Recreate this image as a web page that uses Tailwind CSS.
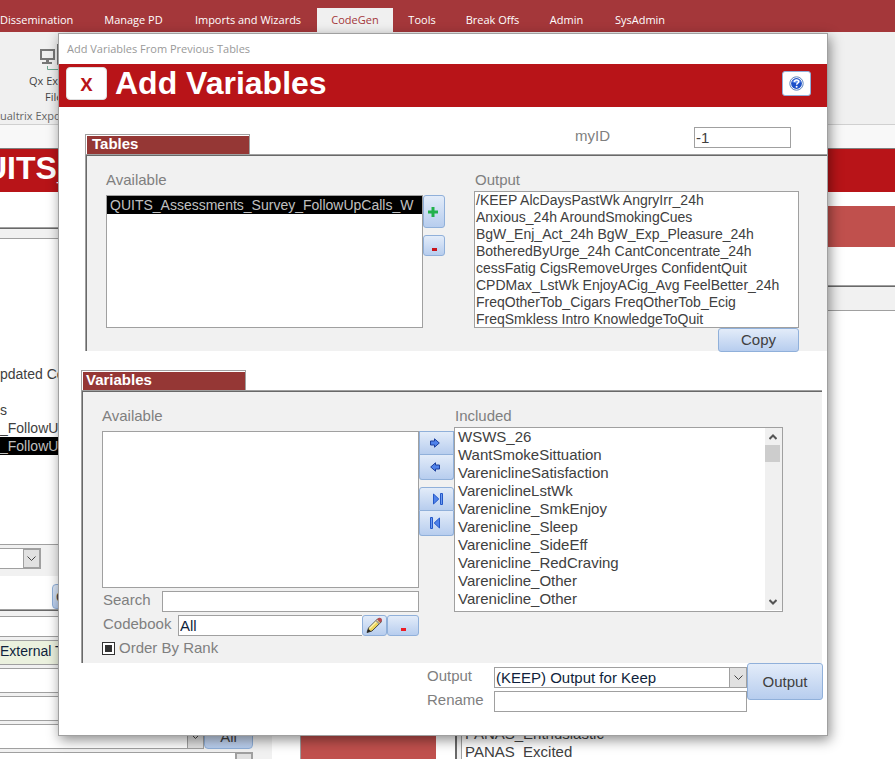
<!DOCTYPE html>
<html lang="en">
<head>
<meta charset="utf-8">
<title>Add Variables</title>
<script src="https://cdn.jsdelivr.net/npm/@tailwindcss/browser@4"></script>
</head>
<body class="bg-white">
<div class="relative h-screen overflow-hidden bg-white font-['Liberation_Sans',Arial,sans-serif] text-[15px] leading-[18px] text-[#404040]">

  <!-- Ribbon tabs -->
  <nav class="flex h-8 items-end bg-[#a4373a] font-['Open_Sans',sans-serif] text-[11px] text-white">
    <a href="#" class="h-6 w-[88px] leading-6">Dissemination</a>
    <a href="#" class="h-6 w-[91px] text-center leading-6">Manage PD</a>
    <a href="#" class="h-6 w-[138px] text-center leading-6">Imports and Wizards</a>
    <a href="#" class="h-6 w-[76px] bg-[#f0f0f0] text-center leading-6 text-[#a4373a]">CodeGen</a>
    <a href="#" class="h-6 w-[58px] text-center leading-6">Tools</a>
    <a href="#" class="h-6 w-[83px] text-center leading-6">Break Offs</a>
    <a href="#" class="h-6 w-[65px] text-center leading-6">Admin</a>
    <a href="#" class="h-6 w-[82px] text-center leading-6">SysAdmin</a>
  </nav>

  <!-- Ribbon body -->
  <div class="h-[93px] border-b border-[#d0d0d0] bg-[#f0f0f0] pt-3 font-['Open_Sans',sans-serif] text-[11px] leading-4 text-[#444]">
    <svg class="ml-10 block" width="40" height="29" viewBox="0 0 40 29" fill="none">
      <path d="M1 6h13v9H1z" stroke="#777" stroke-width="2"/>
      <path d="M6 16h3v2h3v2H2v-2h4z" fill="#777"/>
      <path d="M17.500-1.500h14v22h-14z" stroke="#777"/>
      <path d="M7.500 22v3.500h20" stroke="#6fa590"/>
    </svg>
    <p class="ml-[29px]">Qx Export</p>
    <p class="ml-[45px]">Files</p>
    <p class="mt-[3px] text-[#666]">ualtrix Export</p>
  </div>
  <div class="h-6 border-b border-[#808080] bg-[#f8f8f8]"></div>
  <div class="h-[43px] overflow-hidden bg-[#b81418]">
    <h2 class="-ml-4 pt-px text-[32px] leading-9 font-bold text-white">UITS_Assessments</h2>
  </div>

  <div class="flex items-stretch">
    <!-- Left column -->
    <div class="w-[272px] shrink-0">
      <div class="h-[35px]"></div>
      <div class="border-t border-[#a0a0a0] bg-[#f1f1f1]">
        <div class="border-t border-[#696969] pt-[9px]">
          <ul class="h-[307px] border-y border-[#a0a0a0] bg-white pt-[126px] text-[14px]">
            <li class="h-9">pdated Codes</li>
            <li>s</li>
            <li>_FollowUpCalls</li>
            <li class="bg-black text-[#c0c0c0]">_FollowUpCalls</li>
          </ul>
          <div class="flex pt-[3px] pb-[7px]">
            <label class="relative w-[41px]"><span class="sr-only">Source</span>
              <select class="block h-[21px] w-full appearance-none border border-l-0 border-[#a0a0a0] bg-white"><option></option></select>
              <span class="pointer-events-none absolute top-0 right-0 flex h-[21px] w-[18px] items-center justify-center border-2 border-l border-[#a0a0a0] bg-[#e1e1e1]"><svg width="9" height="6" viewBox="0 0 9 6" fill="none" stroke="#444"><path d="M.5.5l4 4 4-4"/></svg></span>
            </label>
          </div>
        </div>
      </div>
      <div class="h-[33px] pt-2 pl-[52px]"><button class="h-[25px] w-20 rounded border border-[#90b0da] bg-linear-to-b from-[#dfe9f7] to-[#b7cdee] pl-[3px] text-left">Open</button></div>
      <div class="border-t border-[#a0a0a0] bg-[#f1f1f1]">
        <div class="flex flex-col gap-[3px] border-t border-[#696969] pt-[5px] pr-[19px]">
          <input aria-label="Name" class="h-[21px] border border-l-0 border-[#a0a0a0] bg-white">
          <input aria-label="Kind" value="External Table" class="h-[25px] border border-l-0 border-[#a0a0a0] bg-[#ebf1de] pb-1 text-[14px] text-[#0f1f3c]">
          <input aria-label="Path" class="h-[25px] border border-l-0 border-[#a0a0a0] bg-white">
          <input aria-label="Filter" class="h-[25px] border border-l-0 border-[#a0a0a0] bg-white">
          <div class="flex">
            <label class="relative flex-1"><span class="sr-only">Group</span>
              <select class="block h-[25px] w-full appearance-none border border-l-0 border-[#a0a0a0] bg-white"><option></option></select>
              <span class="pointer-events-none absolute top-0 right-0 flex h-[25px] w-[17px] items-center justify-center border border-[#a0a0a0] bg-[#e1e1e1]"><svg width="9" height="6" viewBox="0 0 9 6" fill="none" stroke="#444"><path d="M.5.5l4 4 4-4"/></svg></span>
            </label>
            <button class="h-[25px] w-[49px] rounded border border-[#90b0da] bg-linear-to-b from-[#dfe9f7] to-[#b7cdee]">All</button>
          </div>
          <label class="relative"><span class="sr-only">Item</span>
            <select class="block h-[25px] w-full appearance-none border border-l-0 border-[#a0a0a0] bg-white"><option></option></select>
            <span class="pointer-events-none absolute top-0 right-0 h-[25px] w-[18px] border-2 border-[#a0a0a0] bg-[#e1e1e1]"></span>
          </label>
        </div>
      </div>
    </div>

    <!-- Right column -->
    <div class="flex min-w-0 flex-1 flex-col pt-[14px]">
      <div class="h-[41px] bg-[#c0504d]"></div>
      <div class="mt-[38px] border-t border-[#a0a0a0]"><div class="h-6 border-t border-[#696969] bg-[#f1f1f1]"></div></div>
      <div class="flex flex-1 border-t border-[#a0a0a0]">
        <div class="ml-7 w-[136px] border-l border-[#a0a0a0] bg-[#c0504d]"></div>
        <div class="ml-[19px] flex-1 border-l-2 border-[#696969] bg-[#f1f1f1] pl-1">
          <ul class="h-full border-l border-[#a0a0a0] bg-white pt-[414px] pl-[3px]">
            <li>PANAS_Enthusiastic</li>
            <li>PANAS_Excited</li>
          </ul>
        </div>
      </div>
    </div>
  </div>

  <!-- Dialog -->
  <section role="dialog" aria-labelledby="dlg" class="absolute top-[33px] right-[67px] left-[58px] border border-[#a0a0a0] bg-white pb-[23px] shadow-[2px_4px_12px_rgba(0,0,0,0.45)]">
    <p class="h-[30px] pl-2 font-['Open_Sans',sans-serif] text-[11px] leading-[30px] text-[#999]">Add Variables From Previous Tables</p>
    <header class="flex h-[43px] items-start bg-[#b81418] pr-4 pl-[7px]">
      <button class="mt-[3px] h-[33px] w-[41px] rounded border border-[#ddd] bg-white font-['Open_Sans',sans-serif] text-[18px] leading-7 font-bold text-[#b81418]">X</button>
      <h1 id="dlg" class="ml-2 flex-1 text-[32px] leading-[38px] font-bold text-white">Add Variables</h1>
      <button aria-label="Help" class="mt-[7px] flex h-[25px] w-[29px] items-center justify-center rounded-[3px] border border-[#90b0da] bg-white">
        <svg width="15" height="15" viewBox="0 0 15 15"><circle cx="7.500" cy="7.500" r="6.700" fill="#fff" stroke="#5f84bd"/><circle cx="7.500" cy="7.500" r="5.400" fill="#1c50c8"/><path d="M3 6a5 5 0 0 1 9 0q-4 2-9 0" fill="#6d9af0"/><path d="M5.500 6c0-2.600 4.200-2.600 4.200-.3 0 1.500-2 1.500-2 3" fill="none" stroke="#fff" stroke-width="1.500"/><circle cx="7.600" cy="10.800" r="1" fill="#fff"/></svg>
      </button>
    </header>

    <!-- Tables -->
    <div class="flex h-[47px] items-end pr-9 pl-[26px]">
      <h2 class="h-5 w-[165px] border border-b-0 border-[#a0a0a0] bg-white pt-px pl-px font-bold text-white"><span class="block h-[18px] bg-[#953735] pl-[5px] leading-4">Tables</span></h2>
      <label for="myid" class="mb-[9px] ml-auto w-[119px] text-[#7f7f7f]">myID</label>
      <input id="myid" value="-1" class="mb-[6px] h-[21px] w-[97px] border border-[#a0a0a0] bg-white pl-px">
    </div>
    <div class="ml-[26px] border-t border-l border-[#a0a0a0]">
      <div class="flex h-[196px] border-t border-l border-[#696969] bg-[#f1f1f1] pt-[15px] pr-7 pl-[19px]">
        <div class="min-w-0 flex-[317]">
          <h3 class="h-6 text-[#7f7f7f]">Available</h3>
          <ul role="listbox" class="h-[133px] overflow-hidden border border-[#a0a0a0] bg-white">
            <li role="option" aria-selected="true" class="overflow-hidden bg-black pl-[3px] text-[14px] whitespace-nowrap text-[#c0c0c0]">QUITS_Assessments_Survey_FollowUpCalls_W</li>
          </ul>
        </div>
        <div class="mr-[29px] flex w-[22px] flex-col gap-[7px] pt-6">
          <button aria-label="Add" class="flex h-[33px] items-center justify-center rounded-[3px] border border-[#90b0da] bg-linear-to-b from-[#e3ecf9] to-[#b7cdee] pr-0.5"><svg width="10" height="10" viewBox="0 0 10 10"><path d="M3.500 0h3v3.500H10v3H6.500V10h-3V6.500H0v-3h3.500z" fill="#22b14c"/></svg></button>
          <button aria-label="Remove" class="flex h-[21px] items-end justify-center rounded-[3px] border border-[#90b0da] bg-linear-to-b from-[#e3ecf9] to-[#b7cdee] pb-1"><svg width="5" height="3"><rect width="5" height="3" fill="#c8141c"/></svg></button>
        </div>
        <div class="min-w-0 flex-[325]">
          <label for="out" class="block h-5 pl-px text-[#7f7f7f]">Output</label>
          <textarea id="out" class="block h-[137px] w-full resize-none overflow-hidden border border-[#a0a0a0] bg-white pl-px text-[14px] leading-[17px] whitespace-pre">/KEEP AlcDaysPastWk AngryIrr_24h
Anxious_24h AroundSmokingCues
BgW_Enj_Act_24h BgW_Exp_Pleasure_24h
BotheredByUrge_24h CantConcentrate_24h
cessFatig CigsRemoveUrges ConfidentQuit
CPDMax_LstWk EnjoyACig_Avg FeelBetter_24h
FreqOtherTob_Cigars FreqOtherTob_Ecig
FreqSmkless Intro KnowledgeToQuit</textarea>
          <button class="ml-auto block h-6 w-[81px] rounded-[3px] border border-[#90b0da] bg-linear-to-b from-[#e3ecf9] to-[#b7cdee]">Copy</button>
        </div>
      </div>
    </div>

    <!-- Variables -->
    <div class="flex pt-[19px] pl-[22px]">
      <h2 class="h-5 w-[165px] border border-b-0 border-[#a0a0a0] bg-white pt-px pl-px font-bold text-white"><span class="block h-[18px] bg-[#953735] pl-[3px] leading-4">Variables</span></h2>
    </div>
    <div class="mr-[5px] ml-[22px] border-t border-l border-[#a0a0a0]">
      <div class="flex h-[272px] border-t border-l border-[#696969] bg-[#f1f1f1] pt-[15px] pr-[39px] pl-[19px]">
        <div class="min-w-0 flex-[317]">
          <h3 class="h-6 text-[#7f7f7f]">Available</h3>
          <ul role="listbox" aria-label="Available variables" class="h-[157px] border border-[#a0a0a0] bg-white"></ul>
          <div class="mt-[3px] flex"><label for="search" class="w-[60px] pl-px text-[#7f7f7f]">Search</label><input id="search" class="h-[21px] min-w-0 flex-1 border border-[#a0a0a0] bg-white"></div>
          <div class="mt-[3px] flex">
            <label for="codebook" class="w-[76px] pl-px text-[#7f7f7f]">Codebook</label>
            <input id="codebook" value="All" class="h-[21px] min-w-0 flex-1 border border-r-0 border-[#a0a0a0] bg-white pl-px text-[#0f1f3c]">
            <button aria-label="Edit" class="flex h-[21px] w-[25px] items-center justify-center rounded-[3px] border border-[#90b0da] bg-linear-to-b from-[#e3ecf9] to-[#b7cdee]"><svg width="17" height="17" viewBox="0 0 17 17"><path d="M1 15.500l1.500-4.500L12 1.500l3.500 3.200L6 14z" fill="#ecd55a" stroke="#444"/><path d="M3.500 11.500L12 3" stroke="#fff5b0" stroke-width="1.500"/><path d="M11 2.500L13 .8q3-.3 3 2.700L14.300 5.800z" fill="#b84a50"/><path d="M10 3.500l3.300 3.200" stroke="#999" stroke-width="1.500"/><path d="M1 15.500l1.200-3.500 2.800 2.300z" fill="#222"/></svg></button>
            <button aria-label="Clear" class="flex h-[21px] w-8 items-end justify-center rounded-[3px] border border-[#90b0da] bg-linear-to-b from-[#e3ecf9] to-[#b7cdee] pb-1"><svg width="5" height="3"><rect width="5" height="3" fill="#ed1c24"/></svg></button>
          </div>
          <div class="mt-[3px] flex items-center gap-1 text-[#7f7f7f]">
            <span class="flex bg-white"><input id="rank" type="checkbox" checked class="size-[13px] appearance-none border border-[#333] bg-[#333] bg-clip-content p-[2px]"></span>
            <label for="rank">Order By Rank</label>
          </div>
        </div>
        <div class="flex w-[35px] flex-col pt-6">
          <button aria-label="Include" class="flex h-6 items-center justify-center border border-[#90b0da] bg-linear-to-b from-[#e3ecf9] to-[#b7cdee] pr-1"><svg width="10" height="10" viewBox="0 0 10 10"><path d="M.5 3h4V.8L9.300 5 4.500 9.200V7h-4z" fill="#4f82ea" stroke="#1c3f9c"/></svg></button>
          <button aria-label="Exclude" class="flex h-[25px] items-center justify-center rounded-b-[3px] border border-t-0 border-[#90b0da] bg-linear-to-b from-[#e3ecf9] to-[#b7cdee] pr-1"><svg width="10" height="10" viewBox="0 0 10 10"><path d="M9.500 3h-4V.8L.7 5l4.800 4.200V7h4z" fill="#4f82ea" stroke="#1c3f9c"/></svg></button>
          <button aria-label="Include all" class="mt-[7px] flex h-6 items-center justify-center rounded-t-[3px] border border-[#90b0da] bg-linear-to-b from-[#e3ecf9] to-[#b7cdee] pl-0.5"><svg width="10" height="12" viewBox="0 0 10 12"><path d="M.5 1l5.300 5-5.300 5z" fill="#4f82ea" stroke="#2458c8"/><path d="M7.500.5h2v11h-2z" fill="#6d9af0" stroke="#2458c8"/></svg></button>
          <button aria-label="Exclude all" class="flex h-[25px] items-center justify-center rounded-b-[3px] border border-t-0 border-[#90b0da] bg-linear-to-b from-[#e3ecf9] to-[#b7cdee] pr-1"><svg width="10" height="12" viewBox="0 0 10 12"><path d="M9.500 1L4.200 6l5.300 5z" fill="#4f82ea" stroke="#2458c8"/><path d="M.5.5h2v11h-2z" fill="#6d9af0" stroke="#2458c8"/></svg></button>
        </div>
        <div class="min-w-0 flex-[329]">
          <h3 class="h-5 pl-px text-[#7f7f7f]">Included</h3>
          <div class="flex h-[185px] border border-[#a0a0a0] bg-white">
            <ul role="listbox" aria-label="Included variables" class="flex-1 overflow-hidden pl-[3px]">
              <li>WSWS_26</li>
              <li>WantSmokeSittuation</li>
              <li>VareniclineSatisfaction</li>
              <li>VareniclineLstWk</li>
              <li>Varenicline_SmkEnjoy</li>
              <li>Varenicline_Sleep</li>
              <li>Varenicline_SideEff</li>
              <li>Varenicline_RedCraving</li>
              <li>Varenicline_Other</li>
              <li>Varenicline_Other</li>
            </ul>
            <div class="mb-px flex w-[17px] flex-col bg-[#f0f0f0] pr-0.5">
              <span class="flex h-[17px] items-center justify-center"><svg width="8" height="6" viewBox="0 0 8 6" fill="none" stroke="#555" stroke-width="2"><path d="M.5 5L4 1.500 7.500 5"/></svg></span>
              <span class="h-[17px] bg-[#cdcdcd]"></span>
              <span class="mt-auto flex h-[17px] items-center justify-center"><svg width="8" height="6" viewBox="0 0 8 6" fill="none" stroke="#555" stroke-width="2"><path d="M.5 1L4 4.500 7.500 1"/></svg></span>
            </div>
          </div>
        </div>
      </div>
    </div>

    <!-- Output options -->
    <div class="flex items-start justify-end pr-1">
      <div class="w-[320px] pt-1">
        <div class="flex">
          <label for="kind" class="w-[67px] text-[#7f7f7f]">Output</label>
          <div class="relative flex-1">
            <select id="kind" class="block h-[21px] w-full appearance-none border border-[#a0a0a0] bg-white pl-px leading-[18px] text-[#0f1f3c]"><option>(KEEP) Output for Keep</option></select>
            <span class="pointer-events-none absolute top-0 right-0 flex h-[21px] w-[18px] items-center justify-center border border-[#a0a0a0] bg-[#e1e1e1]"><svg width="9" height="6" viewBox="0 0 9 6" fill="none" stroke="#444"><path d="M.5.5l4 4 4-4"/></svg></span>
          </div>
        </div>
        <div class="mt-[3px] flex">
          <label for="rename" class="w-[67px] text-[#7f7f7f]">Rename</label>
          <input id="rename" class="h-[21px] min-w-0 flex-1 border border-[#a0a0a0] bg-white">
        </div>
      </div>
      <button class="h-[37px] w-[76px] rounded-[3px] border border-[#90b0da] bg-linear-to-b from-[#e3ecf9] to-[#b7cdee]">Output</button>
    </div>
  </section>
</div>
</body>
</html>
